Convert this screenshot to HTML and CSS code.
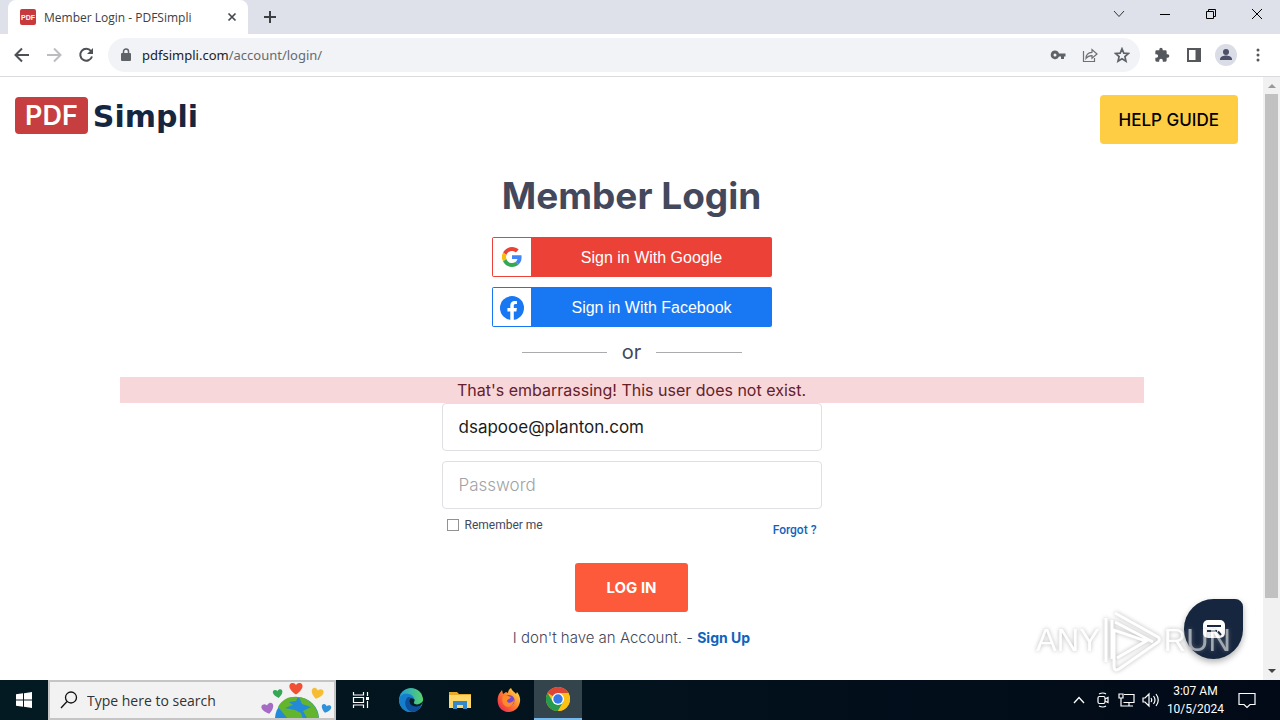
FILE: index.html
```html
<!DOCTYPE html>
<html lang="en">
<head>
  <meta charset="UTF-8" />
  <meta name="viewport" content="width=device-width, initial-scale=1" />
  <title>Member Login - PDFSimpli</title>
  <link rel="stylesheet" href="styles.css">
</head>
<body>
  <div class="tabstrip">
    <div class="tab">
      <svg class="favicon" width="16" height="16" viewBox="0 0 16 16"><rect width="16" height="16" rx="2" fill="#c8393d"/><text x="8" y="11" text-anchor="middle" class="favicon-text">PDF</text></svg>
      <span class="tab-title">Member Login - PDFSimpli</span>
      <button class="icon-btn tab-close" aria-label="Close tab"><svg width="10" height="10" viewBox="0 0 10 10"><path d="M1.500 1.500l7 7M8.500 1.500l-7 7" stroke="#45494d" stroke-width="1.700"/></svg></button>
    </div>
    <button class="icon-btn new-tab" aria-label="New tab"><svg width="14" height="14" viewBox="0 0 14 14"><path d="M7 1v12M1 7h12" stroke="#3c4043" stroke-width="2"/></svg></button>
    <div class="window-buttons">
      <button class="icon-btn" aria-label="Search tabs"><svg width="12" height="12" viewBox="0 0 12 12"><path d="M1 3l5 5.500L11 3" fill="none" stroke="#333"/></svg></button>
      <button class="icon-btn" aria-label="Minimize"><svg width="12" height="12" viewBox="0 0 12 12"><path d="M1 6.500h10" stroke="#000"/></svg></button>
      <button class="icon-btn" aria-label="Restore"><svg width="12" height="12" viewBox="0 0 12 12"><path d="M1.500 3.500h7v7h-7zM3.500 3.500v-2h7v7h-2" fill="none" stroke="#000"/></svg></button>
      <button class="icon-btn" aria-label="Close"><svg width="12" height="12" viewBox="0 0 12 12"><path d="M1 1l10 10M11 1L1 11" stroke="#000"/></svg></button>
    </div>
  </div>

  <div class="toolbar">
    <button class="icon-btn" aria-label="Back"><svg width="16" height="16" viewBox="0 0 16 16"><path d="M15 8H2M8 1.500L1.500 8 8 14.500" fill="none" stroke="#4d5156" stroke-width="2"/></svg></button>
    <button class="icon-btn" aria-label="Forward"><svg width="16" height="16" viewBox="0 0 16 16"><path d="M1 8h13M8 1.500L14.500 8 8 14.500" fill="none" stroke="#bbbdc0" stroke-width="2"/></svg></button>
    <button class="icon-btn" aria-label="Reload"><svg width="16" height="16" viewBox="0 0 16 16"><path d="M13 4a6 6 0 1 0 1 5.500" fill="none" stroke="#4d5156" stroke-width="2"/><path d="M15 1v6H9z" fill="#4d5156"/></svg></button>
    <div class="omnibox">
      <svg width="10" height="14" viewBox="0 0 10 14"><rect y="5" width="10" height="8" rx="1" fill="#5f6368"/><path d="M2.500 5.500V3.500a2.500 2.500 0 0 1 5 0v2" fill="none" stroke="#5f6368" stroke-width="1.500"/></svg>
      <div class="url"><span>pdfsimpli.com</span>/account/login/</div>
      <div class="omnibox-icons">
        <button class="icon-btn" aria-label="Passwords"><svg width="16" height="16" viewBox="0 0 16 16"><path fill-rule="evenodd" fill="#5f6368" d="M5 3.500a4.300 4.300 0 1 0 4 6H11V12h3V9.500h1.500v-3H9a4.300 4.300 0 0 0-4-3zm0 3a1.500 1.500 0 1 1 0 3 1.500 1.500 0 0 1 0-3z"/></svg></button>
        <button class="icon-btn" aria-label="Share"><svg width="16" height="16" viewBox="0 0 16 16" fill="none" stroke="#6c7074" stroke-width="1.200"><path d="M1.500 4v10.500h11V11M4 11.500C4 7.500 6.500 5.500 10 5.300V2.500l5 4.500-5 4.300V8.600C7 8.500 5.500 9.500 4 11.500z"/></svg></button>
        <button class="icon-btn" aria-label="Bookmark"><svg width="16" height="16" viewBox="0 0 16 16"><path d="M8 1.800l1.800 4.300 4.700.4-3.600 3.100 1.100 4.600L8 11.700l-4 2.500 1.100-4.600-3.600-3.100 4.700-.4z" fill="none" stroke="#5f6368" stroke-width="1.700"/></svg></button>
      </div>
    </div>
    <div class="toolbar-right">
      <button class="icon-btn" aria-label="Extensions"><svg width="16" height="16" viewBox="0 0 24 24"><path fill="#54585d" d="M20.500 11H19V7a2 2 0 0 0-2-2h-4V3.500a2.500 2.500 0 0 0-5 0V5H4a2 2 0 0 0-2 2v3.800h1.500a2.700 2.700 0 0 1 0 5.400H2V20c0 1.100.9 2 2 2h3.800v-1.500a2.700 2.700 0 0 1 5.400 0V22H17a2 2 0 0 0 2-2v-4h1.500a2.500 2.500 0 0 0 0-5z"/></svg></button>
      <button class="icon-btn" aria-label="Side panel"><svg width="14" height="14" viewBox="0 0 14 14"><path d="M1 1h12v12H1z" fill="none" stroke="#54585d" stroke-width="2"/><path d="M8.500 1H13v12H8.500z" fill="#54585d"/></svg></button>
      <button class="icon-btn" aria-label="Profile"><svg width="22" height="22" viewBox="0 0 22 22"><circle cx="11" cy="11" r="11" fill="#dadce6"/><circle cx="11" cy="8" r="3" fill="#4c5068"/><path d="M5 16v-1c0-2.400 4-3.500 6-3.500s6 1.100 6 3.500v1z" fill="#4c5068"/></svg></button>
      <button class="icon-btn" aria-label="Menu"><svg width="4" height="14" viewBox="0 0 4 14" fill="#54585d"><circle cx="2" cy="2" r="1.500"/><circle cx="2" cy="7" r="1.500"/><circle cx="2" cy="12" r="1.500"/></svg></button>
    </div>
  </div>

  <div class="viewport">
    <main class="page">
      <header class="site-header">
        <a class="logo" href="#"><span class="logo-box">PDF</span><span class="logo-name">Simpli</span></a>
        <button class="help-btn">HELP GUIDE</button>
      </header>

      <form class="login">
        <h1>Member Login</h1>
        <button type="button" class="social google">
          <span class="social-icon"><svg width="20" height="20" viewBox="0 0 48 48"><path fill="#ea4335" d="M24 9.500c3.500 0 6.700 1.200 9.200 3.600l6.900-6.900C35.900 2.400 30.500 0 24 0 14.600 0 6.500 5.400 2.600 13.200l8 6.200C12.400 13.700 17.700 9.500 24 9.500z"/><path fill="#4285f4" d="M47 24.600c0-1.600-.2-3.100-.4-4.600H24v9h12.900c-.6 3-2.300 5.500-4.800 7.200l7.700 6C44.400 38 47 31.800 47 24.600z"/><path fill="#fbbc05" d="M10.500 28.600a14.500 14.500 0 0 1 0-9.200l-8-6.200a24 24 0 0 0 0 21.600z"/><path fill="#34a853" d="M24 48c6.500 0 11.900-2.100 15.900-5.800l-7.700-6c-2.200 1.500-4.900 2.300-8.200 2.300-6.300 0-11.600-4.200-13.500-9.900l-8 6.200C6.500 42.600 14.600 48 24 48z"/></svg></span>
          <span class="social-label">Sign in With Google</span>
        </button>
        <button type="button" class="social facebook">
          <span class="social-icon"><svg width="24" height="26" viewBox="0 0 24 26"><circle cx="12" cy="14" r="12" fill="#1877f2"/><path fill="#fff" d="M10.300 26V17.500H7.400v-3.500h2.900v-2.500c0-2.900 1.700-4.500 4.400-4.500 1.200 0 2.300.2 2.300.2v2.900h-1.500c-1.400 0-1.700.9-1.700 1.700V14h3.100l-.5 3.500h-2.600V26z"/></svg></span>
          <span class="social-label">Sign in With Facebook</span>
        </button>
        <div class="divider"><span>or</span></div>
        <div class="error">That's embarrassing! This user does not exist.</div>
        <div class="fields">
          <input type="email" class="field" aria-label="Email" value="dsapooe@planton.com">
          <input type="password" class="field" aria-label="Password" placeholder="Password">
          <div class="options">
            <label class="remember"><input type="checkbox">Remember me</label>
            <a class="forgot" href="#">Forgot ?</a>
          </div>
        </div>
        <button type="submit" class="login-btn">LOG IN</button>
        <p class="signup">I don't have an Account. - <a href="#">Sign Up</a></p>
      </form>

      <button class="chat" aria-label="Chat"><svg width="22" height="18" viewBox="0 0 22 18"><path fill="#fff" d="M5 0h12a5 5 0 0 1 5 5v8a5 5 0 0 1-5 5H5a5 5 0 0 1-5-5V5a5 5 0 0 1 5-5z"/><path d="M4 6h14M4 11h10M15 11.500l3 3.500" stroke="#16263f" stroke-width="2"/></svg></button>

      <div class="watermark">
        <span>ANY</span>
        <svg width="60" height="66" viewBox="0 0 60 66" fill="none" stroke="#fff" stroke-width="3"><path d="M4 54V10M10 51V12M13 5l43 24a3 3 0 0 1 0 5L17 61q-5 3-5-3V22l32 11-29 17M13 14l38 20"/></svg>
        <span>RUN</span>
      </div>
    </main>
    <div class="scrollbar">
      <svg width="17" height="17" viewBox="0 0 17 17"><path d="M5 11l4-4 4 4z" fill="#999"/></svg>
      <div class="thumb"></div>
      <svg width="17" height="17" viewBox="0 0 17 17"><path d="M5 6h8l-4 4z" fill="#444"/></svg>
    </div>
  </div>

  <footer class="taskbar">
    <button class="task start" aria-label="Start"><svg width="16" height="16" viewBox="0 0 16 16" fill="#fff"><path d="M0 2.300l7-1V7.500H0zM8 1.200L16 0v7.500H8zM0 8.500h7v6.200l-7-1zM8 8.500h8V16l-8-1.200z"/></svg></button>
    <div class="search">
      <svg width="18" height="18" viewBox="0 0 18 18" fill="none" stroke="#111" stroke-width="1.300"><circle cx="11" cy="6.500" r="5.500"/><path d="M7 10.500L1 17"/></svg>
      <input type="text" aria-label="Search" placeholder="Type here to search">
      <svg width="74" height="36" viewBox="0 0 74 36">
        <defs><path id="heart" d="M0 5C-9-1-6-6-3-5.500-1-5.500 0-3.500 0-3.500S1-5.500 3-5.500C6-6 9-1 0 5z"/></defs>
        <circle cx="37" cy="37" r="22" fill="#2489d6"/>
        <path d="M18 25c4-8 12-11 20-10l-2 4-7 1 4 3-8 3 10 2 6 3 2 6H28zM39 15c10 1 18 9 20 21H47l-4-7 8-4-9-3z" fill="#62b52d"/>
        <use href="#heart" transform="translate(8 27) rotate(-15)" fill="#a56bc5"/>
        <use href="#heart" transform="translate(18 12) rotate(-10) scale(.8)" fill="#35a853"/>
        <use href="#heart" transform="translate(36 7) scale(1.100)" fill="#f05034"/>
        <use href="#heart" transform="translate(57 12) rotate(15)" fill="#f7bd32"/>
        <use href="#heart" transform="translate(66 27) rotate(15) scale(.8)" fill="#2d91db"/>
      </svg>
    </div>
    <button class="task task-view" aria-label="Task view"><svg width="18" height="18" viewBox="0 0 18 18" fill="none" stroke="#fff" stroke-width="1.200"><path d="M1.500 1v3h10V1M1.500 6.500h10v5h-10zM1.500 17v-3h10v3M15.500 1v4M15.500 10v7"/><path d="M14 6h3v3h-3z" fill="#fff" stroke="none"/></svg></button>
    <button class="task" aria-label="Edge"><svg width="24" height="24" viewBox="0 0 24 24">
      <defs><linearGradient id="edge" x1="0" y1="0" x2="1" y2="0"><stop offset="0" stop-color="#229bdb"/><stop offset="1" stop-color="#58d36a"/></linearGradient></defs>
      <circle cx="12" cy="12" r="12" fill="url(#edge)"/><path d="M0 12C1 6 6 5 10 6c4 1 6 4 5 7-1 2-2 3 1 4 3 1 5 0 7-1-2 5-7 8-12 8A12 12 0 0 1 0 12z" fill="#167fcb"/><path d="M9 9c-5 4-3 13 4 15 5 0 8-3 10-8-5 3-13 2-13-3 0-2 1-3 2-3-1-1-2-1-3-1z" fill="#0d4f9a"/><path d="M12 10c-3 2-2 6 2 8 4 1 7 0 9-2 1-1 1-2 1-3-2 3-6 4-8 3-3-1 1-3-1-5z" fill="#071b28"/></svg></button>
    <button class="task" aria-label="File Explorer"><svg width="22" height="20" viewBox="0 0 22 20"><path d="M0 2h8l2 2h12v14H0z" fill="#eaa927"/><path d="M0 5h22v13H0z" fill="#ffd766"/><path d="M4 11h14v8h-4v-4H8v4H4z" fill="#3288ca"/></svg></button>
    <button class="task" aria-label="Firefox"><svg width="24" height="24" viewBox="0 0 24 24">
      <defs><linearGradient id="fox" x1="1" y1="0" x2="0" y2="1"><stop offset="0" stop-color="#fff04f"/><stop offset=".5" stop-color="#ff7b2c"/><stop offset="1" stop-color="#e81659"/></linearGradient></defs>
      <path d="M2 6l3-4 1 4 3-2 2 1c0-2 1-4 3-5 1 3 4 4 5 6l1-2c4 5 4 10 1 15-4 6-13 7-18 1C0 16 0 10 2 6z" fill="url(#fox)"/><circle cx="12" cy="12.500" r="5.500" fill="#7548d1"/><path d="M6 8c3-1 5 0 8 1-1 2-4 2-4 4 1 3 5 2 7-1 0 6-6 9-10 5-2-2-2-6-1-9z" fill="#ff8a2a"/></svg></button>
    <button class="task active" aria-label="Chrome"><svg width="24" height="24" viewBox="0 0 24 24"><circle cx="12" cy="12" r="12" fill="#fbc116"/><path d="M12 12L1.600 6A12 12 0 0 1 22.400 6H12z" fill="#de4537"/><path d="M1.600 6A12 12 0 0 0 12 24l5.200-9H7z" fill="#269b50"/><path d="M12 24l5.200-9L12 6h10.400A12 12 0 0 1 12 24z" fill="#fbc116"/><circle cx="12" cy="12" r="6" fill="#fff"/><circle cx="12" cy="12" r="4.700" fill="#3879ea"/></svg></button>
    <div class="tray">
      <div class="tray-icons">
        <span><svg width="12" height="8" viewBox="0 0 12 8"><path d="M1 7l5-5.500L11 7" fill="none" stroke="#fff" stroke-width="1.300"/></svg></span>
        <span><svg width="12" height="16" viewBox="0 0 12 16" fill="none" stroke="#fff" stroke-width="1.200"><rect x="1" y="4.500" width="7" height="7" rx="1.500"/><path d="M8 7l3-1.500v5L8 9M2 2q4-2 7 0M2 14q4 2 7 0"/></svg></span>
        <span><svg width="17" height="16" viewBox="0 0 17 16" fill="none" stroke="#fff" stroke-width="1.200"><path d="M6 2.500h10v8H5.500M11 10.500v3M6 14h9M1 2h4v4H1zM3 6v8h3"/></svg></span>
        <span><svg width="17" height="16" viewBox="0 0 17 16" fill="none" stroke="#fff" stroke-width="1.200"><path d="M1 6h2l4-4v12l-4-4H1zM9 6q1.500 2 0 4M11.500 4q3 4 0 8M14 2q4.500 6 0 12"/></svg></span>
      </div>
      <div class="clock"><span>3:07 AM</span><span>10/5/2024</span></div>
      <svg width="18" height="18" viewBox="0 0 18 18"><path d="M1 2.500h16v11h-5l-3 3-3-3H1z" fill="none" stroke="#fff" stroke-width="1.200"/></svg>
    </div>
  </footer>
</body>
</html>
```
FILE: styles.css
```css
* {
  box-sizing: border-box;
}

body {
  margin: 0;
  min-height: 100vh;
  display: flex;
  flex-direction: column;
  background: #fff;
  font-family: Inter, sans-serif;
  color: #43485c;
}

button {
  border: none;
  cursor: pointer;
  font-family: inherit;
}

svg {
  display: block;
  flex-shrink: 0;
}

a {
  color: #1063bd;
  text-decoration: none;
}

.icon-btn {
  background: none;
  padding: 0;
}

/* browser tabs */
.tabstrip {
  display: flex;
  align-items: center;
  height: 34px;
  padding-left: 8px;
  background: #dee1e9;
}

.tab {
  display: flex;
  align-items: center;
  align-self: stretch;
  width: 240px;
  padding: 0 11px 0 12px;
  background: #fff;
  border-radius: 8px 8px 0 0;
}

.favicon-text {
  font: bold 7px "Liberation Sans", sans-serif;
  fill: #fff;
}

.tab-title {
  flex: 1;
  margin-left: 8px;
  font: 12px "Open Sans", sans-serif;
  color: #3c4043;
}

.new-tab {
  margin-left: 15px;
}

.window-buttons {
  display: flex;
  gap: 34px;
  margin-left: auto;
  margin-right: 17px;
  padding-bottom: 6px;
}

/* address bar */
.toolbar {
  display: flex;
  align-items: center;
  gap: 16px;
  height: 43px;
  padding: 0 6px 0 14px;
  border-bottom: 1px solid #d9dbde;
}

.omnibox {
  flex: 1;
  display: flex;
  align-items: center;
  gap: 11px;
  height: 34px;
  margin-left: -2px;
  padding: 0 10px 0 13px;
  background: #f1f3f6;
  border-radius: 17px;
}

.url {
  font: 13px "Noto Sans", sans-serif;
  color: #666a6f;
}

.url span {
  color: #202124;
}

.omnibox-icons {
  display: flex;
  gap: 16px;
  margin-left: auto;
}

.toolbar-right {
  display: flex;
  align-items: center;
  margin-left: -10px;
}

.toolbar-right .icon-btn {
  display: flex;
  justify-content: center;
  width: 32px;
}

/* page */
.viewport {
  flex: 1;
  display: flex;
}

.page {
  position: relative;
  flex: 1;
}

.site-header {
  display: flex;
  align-items: flex-start;
  justify-content: space-between;
  padding: 18px 25px 0 15px;
}

.logo {
  display: flex;
  align-items: center;
  gap: 5px;
  margin-top: 2px;
}

.logo-box {
  padding: 0 10px;
  border-radius: 4px;
  background: #c63e40;
  color: #fff;
  font: 600 27px/37px Inter, sans-serif;
}

.logo-name {
  padding-top: 3px;
  color: #16263f;
  font: bold 30px/34px "DejaVu Sans", sans-serif;
}

.help-btn {
  height: 49px;
  padding: 0 19px;
  border-radius: 4px;
  background: #ffcd43;
  color: #000;
  font-size: 17px;
  font-weight: 500;
}

.login {
  display: flex;
  flex-direction: column;
  align-items: center;
  padding-top: 28px;
}

h1 {
  margin: 0 0 17px;
  font-size: 37px;
  line-height: 48px;
  font-weight: 700;
}

.social {
  display: flex;
  width: 280px;
  height: 40px;
  margin-bottom: 10px;
  padding: 1px;
  border-radius: 2px;
  color: #fff;
  font: 16px/40px "Liberation Sans", sans-serif;
}

.google {
  background: #ec4136;
}

.facebook {
  background: #1877f2;
}

.social-icon {
  width: 38px;
  height: 38px;
  display: flex;
  align-items: center;
  justify-content: center;
  background: #fff;
}

.social-label {
  flex: 1;
  padding-left: 2px;
}

.divider {
  display: flex;
  align-items: center;
  gap: 15px;
  width: 220px;
  height: 30px;
  margin-bottom: 10px;
  font-size: 20px;
}

.divider::before,
.divider::after {
  content: "";
  flex: 1;
  height: 1px;
  background: #a9abaf;
}

.error {
  width: 1024px;
  max-width: 100%;
  background: #f8d7da;
  color: #65202b;
  font-size: 16px;
  line-height: 26px;
  text-align: center;
}

.fields {
  width: 380px;
}

.field {
  display: block;
  width: 100%;
  height: 48px;
  margin-bottom: 10px;
  padding: 0 16px;
  border: 1px solid #dfe0e3;
  border-radius: 4px;
  background: #fff;
  color: #1b1c20;
  font: 17px Inter, sans-serif;
}

.field::placeholder {
  color: #a2a3a6;
  font-weight: 300;
}

.options {
  display: flex;
  align-items: flex-start;
  justify-content: space-between;
  padding: 0 5px;
  font: 12px/12px Roboto, sans-serif;
}

.remember {
  display: flex;
  align-items: center;
  gap: 6px;
}

.remember input {
  appearance: none;
  width: 12px;
  height: 12px;
  margin: 0;
  border: 1px solid #929292;
}

.forgot {
  padding-top: 5px;
  font-weight: 500;
}

.login-btn {
  height: 49px;
  margin-top: 27px;
  padding: 0 31px;
  border-radius: 3px;
  background: #fc5a3a;
  color: #fff;
  font-size: 15px;
  font-weight: 700;
}

.signup {
  margin: 15px 0 0;
  font-size: 15px;
  font-weight: 300;
  line-height: 22px;
}

.signup a {
  font-size: 14px;
  font-weight: 700;
}

.chat {
  position: absolute;
  right: 20px;
  bottom: 21px;
  width: 59px;
  height: 60px;
  padding: 0;
  display: flex;
  align-items: center;
  justify-content: center;
  border-radius: 30px 8px 30px 30px;
  background: #16263f;
  box-shadow: 0 3px 6px rgba(0, 0, 0, 0.3);
}

.watermark {
  position: absolute;
  right: 32px;
  bottom: 6px;
  display: flex;
  align-items: center;
  gap: 2px;
  color: #fff;
  font: 31px "Liberation Sans", sans-serif;
  opacity: 0.6;
  filter: drop-shadow(0 0 2px #888);
  pointer-events: none;
}

.scrollbar {
  display: flex;
  flex-direction: column;
  width: 17px;
  background: #f1f1f1;
}

.thumb {
  flex: 0 1 504px;
  margin: 0 2px;
  background: #c1c1c1;
}

.scrollbar svg:last-child {
  margin-top: auto;
}

/* taskbar */
.taskbar {
  display: flex;
  height: 40px;
  background: linear-gradient(to right, #031a22, #020a18);
}

.task {
  display: flex;
  align-items: center;
  justify-content: center;
  width: 48px;
  margin-right: 1px;
  padding: 0;
  background: none;
}

.start {
  margin-right: 0;
}

.task-view {
  width: 50px;
}

.active {
  background: #34444c;
  border-bottom: 2px solid #76b9ed;
}

.search {
  display: flex;
  align-items: center;
  width: 288px;
  padding-left: 10px;
  background: #f2f2f2;
  border: 2px solid #c5c5c5;
}

.search input {
  flex: 1;
  min-width: 0;
  margin-left: 9px;
  padding: 0;
  border: none;
  background: none;
  font: 14px "Open Sans", sans-serif;
}

.search input::placeholder {
  color: #333;
}

.tray {
  display: flex;
  align-items: center;
  margin-left: auto;
  padding-right: 24px;
}

.tray-icons {
  display: flex;
}

.tray-icons span {
  display: flex;
  align-items: center;
  justify-content: center;
  width: 24px;
}

.clock {
  display: flex;
  flex-direction: column;
  align-items: center;
  margin: 0 14px 0 4px;
  color: #fff;
  font: 12px/18px Roboto, sans-serif;
}
```
